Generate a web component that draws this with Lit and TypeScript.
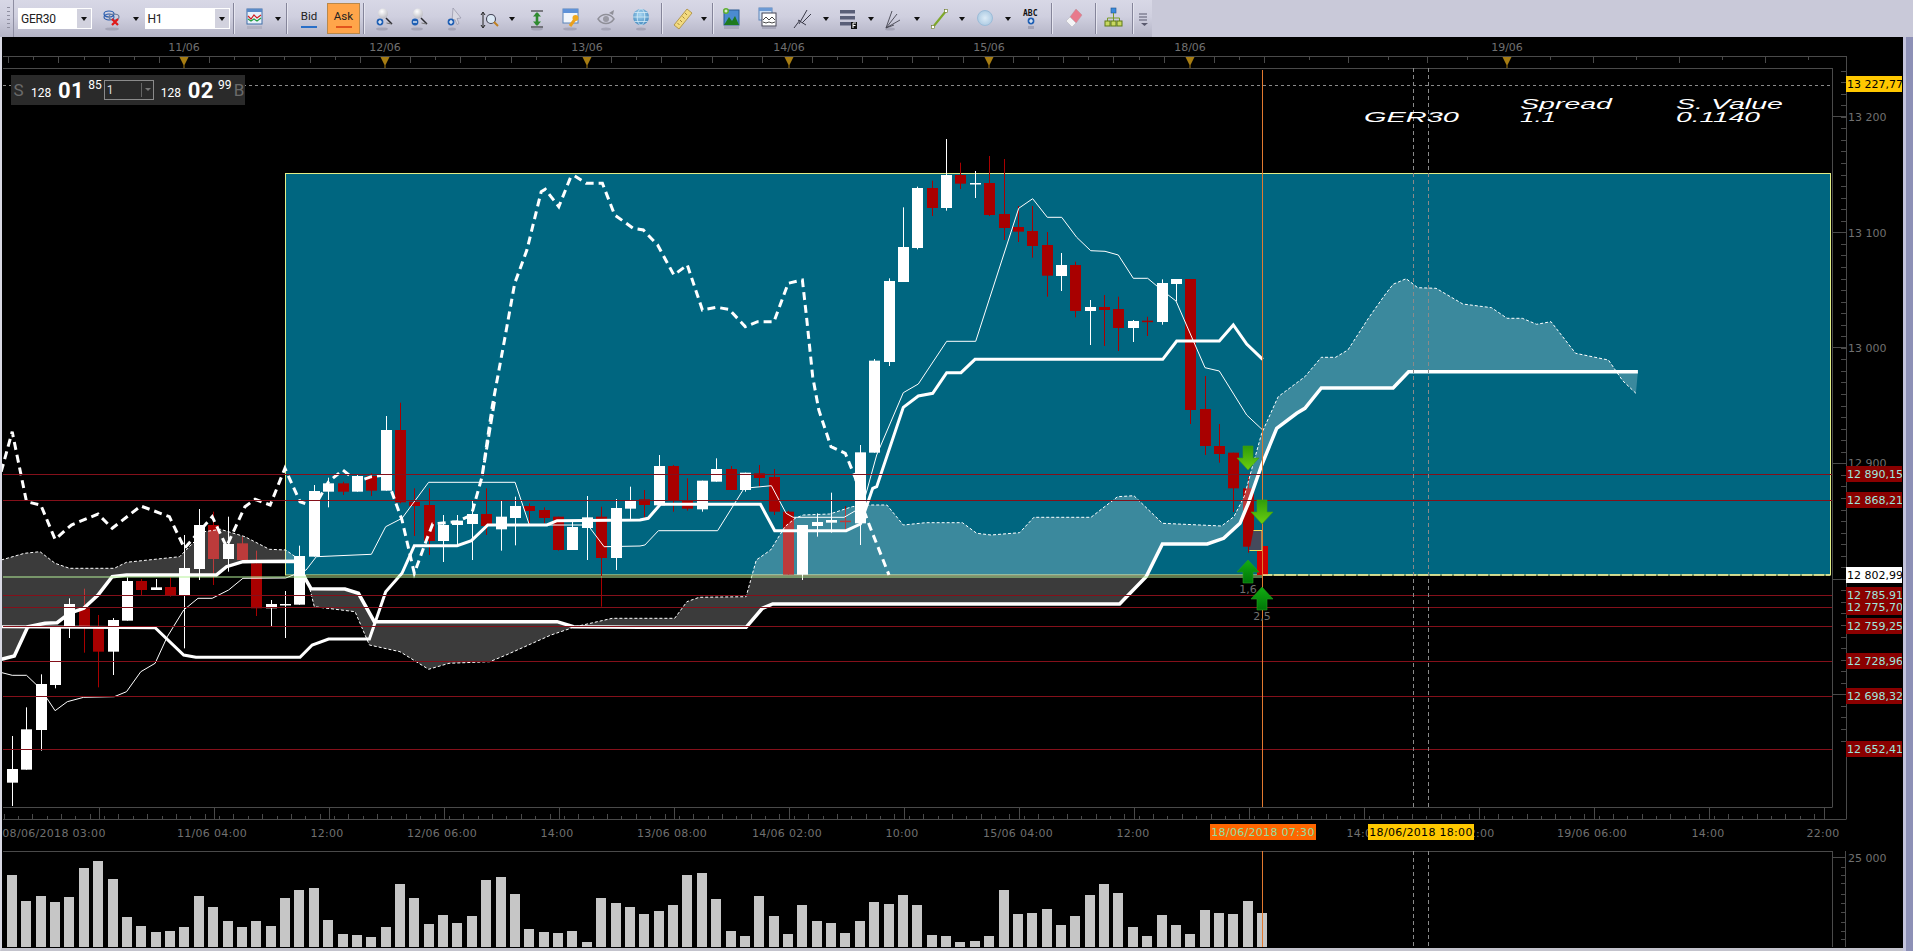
import { LitElement, html, css, svg } from 'lit';
import { customElement } from 'lit/decorators.js';

type Pt = [number, number];
type Candle = [0 | 1, number, number, number, number]; // 1 = red, wick top, body top, body bottom, wick bottom

const BAR_STEP = 14.37;
const barX = (k: number) => 12 + BAR_STEP * k;

// readings taken off three crops of the chart, each with its own origin and scale
const scaled = (x0: number, sx: number, y0: number, raw: number[]): Pt[] => {
  const out: Pt[] = [];
  for (let i = 0; i < raw.length; i += 2) out.push([x0 + raw[i] / sx, y0 + raw[i + 1] / 3]);
  return out;
};
const west = (raw: number[]) => scaled(0, 2.45, 400, raw);
const mid = (raw: number[]) => scaled(640, 2.45, 400, raw);
const top = (raw: number[]) => scaled(280, 2.45, 120, raw);
const peak = (raw: number[]) => scaled(860, 3, 120, raw);
const last = (raw: number[]) => scaled(1130, 3, 400, raw);
const east = (raw: number[]) => scaled(1270, 2.438, 40, raw);
const poly = (pts: Pt[]) => pts.map(p => `${p[0].toFixed(1)},${p[1].toFixed(1)}`).join(' ');

const candleRows = (y0: number, rows: Candle[]): Candle[] =>
  rows.map(r => [r[0], y0 + r[1] / 3, y0 + r[2] / 3, y0 + r[3] / 3, y0 + r[4] / 3]);

const CANDLES: Candle[] = [
  ...candleRows(400, [
    [0, 1008, 1107, 1148, 1218], [0, 922, 988, 1109, 1109], [0, 823, 852, 990, 1052], [0, 684, 684, 855, 865],
    [0, 595, 612, 678, 714], [1, 566, 625, 678, 758], [1, 645, 685, 755, 862], [0, 654, 660, 755, 825],
    [0, 532, 543, 662, 662], [1, 537, 543, 570, 587], [0, 537, 562, 570, 570], [1, 533, 561, 587, 590],
    [0, 405, 504, 585, 745], [0, 327, 375, 507, 540], [1, 335, 375, 477, 555], [0, 350, 432, 477, 515],
    [1, 410, 430, 480, 480], [1, 452, 490, 625, 648], [0, 600, 612, 625, 678], [0, 573, 612, 615, 714],
    [0, 437, 468, 614, 614], [0, 255, 273, 470, 470], [0, 233, 250, 275, 322], [1, 245, 250, 275, 285],
    [0, 225, 228, 275, 275], [1, 220, 228, 272, 288], [0, 48, 90, 272, 272], [1, 8, 90, 307, 310],
    [1, 265, 305, 318, 408], [1, 265, 315, 423, 465], [0, 345, 375, 423, 486], [0, 345, 362, 375, 432],
    [0, 300, 342, 372, 480], [1, 265, 342, 378, 405], [0, 303, 350, 388, 452], [0, 290, 318, 354, 436],
    [1, 310, 318, 333, 370], [1, 322, 330, 354, 370], [1, 350, 350, 450, 452], [0, 365, 381, 450, 450],
    [0, 288, 352, 384, 480], [1, 320, 350, 474, 620], [0, 297, 324, 474, 510], [0, 260, 300, 326, 360],
    [1, 270, 298, 315, 355], [0, 165, 198, 316, 316], [1, 195, 198, 302, 335], [1, 235, 300, 326, 332],
    [0, 242, 242, 328, 335], [0, 175, 207, 245, 245], [1, 198, 207, 270, 270], [0, 218, 218, 270, 275],
    [1, 195, 220, 234, 262], [1, 207, 231, 335, 345], [1, 332, 335, 524, 524], [0, 375, 375, 524, 540],
    [0, 340, 366, 378, 410], [0, 278, 360, 368, 398], [1, 318, 362, 366, 395], [0, 135, 157, 370, 435],
  ]),
  ...candleRows(120, [
    [0, 717, 722, 998, 998], [0, 475, 483, 726, 738], [0, 262, 381, 486, 486], [0, 200, 204, 384, 388],
    [1, 182, 204, 264, 288], [0, 57, 165, 264, 272], [1, 128, 165, 191, 207], [0, 153, 189, 191, 234],
    [1, 108, 189, 285, 288], [1, 117, 282, 324, 360], [1, 258, 321, 335, 366], [1, 258, 333, 378, 413],
    [1, 336, 375, 467, 530], [0, 399, 435, 468, 513], [1, 425, 435, 573, 592], [0, 540, 561, 573, 675],
    [1, 525, 561, 570, 678], [1, 530, 567, 624, 693], [0, 600, 603, 624, 666], [1, 590, 602, 604, 648],
    [0, 478, 489, 606, 614], [0, 477, 477, 492, 543], [1, 477, 477, 870, 912], [1, 768, 867, 978, 1005],
    [1, 912, 978, 1002, 1028],
  ]),
  ...candleRows(400, [
    [1, 158, 158, 265, 336], [1, 230, 265, 440, 458], [1, 438, 438, 525, 525],
  ]),
];

const LEADING_THICK: Pt[] = [
  ...west([3, 778, 35, 768, 68, 680, 110, 670, 140, 668, 170, 640, 205, 625, 240, 585, 275, 530, 310, 525, 530, 525,
    555, 500, 595, 485, 725, 484, 745, 530, 762, 566, 845, 567, 878, 580, 917, 665, 1365, 665, 1405, 680, 1568, 682]),
  ...mid([260, 682, 300, 625, 325, 612, 1175, 612, 1240, 530, 1280, 432, 1390, 432, 1430, 415, 1470, 370]),
  ...last([355, 310, 395, 195, 440, 85, 500, 40]),
  ...east([85, 1105, 125, 1044, 300, 1044, 338, 995, 897, 995]),
];

const BASE_LINE: Pt[] = [
  ...west([3, 680, 380, 683, 450, 765, 480, 772, 735, 772, 765, 735, 805, 717, 905, 717, 945, 575, 985, 520, 1015, 437,
    1120, 437, 1155, 422, 1195, 375, 1340, 375, 1365, 362, 1568, 360]),
  ...mid([20, 355, 50, 313, 295, 313, 330, 392, 505, 392, 540, 372, 570, 265]),
  ...peak([50, 1100, 130, 862, 175, 828, 218, 820, 260, 758, 303, 758, 345, 718, 908, 718, 950, 663, 1078, 663, 1120, 615, 1160, 672, 1208, 718]),
];

const THIN_LINE: Pt[] = [
  ...west([5, 818, 30, 826, 65, 826, 90, 855, 115, 895, 135, 932, 165, 905, 205, 892, 280, 890, 310, 875, 345, 815, 380, 790,
    410, 710, 450, 630, 485, 595, 520, 595, 560, 570, 595, 535, 700, 534, 750, 510, 775, 470, 910, 463, 945, 380, 985, 355,
    1050, 247, 1262, 247, 1297, 375, 1440, 375, 1480, 440, 1568, 438]),
  ...mid([12, 435, 45, 392, 190, 392, 255, 265, 322, 257, 358, 340, 375, 352, 500, 352, 545, 320, 580, 165]),
  ...peak([130, 818, 175, 792, 260, 664, 347, 664, 476, 265, 518, 236, 562, 292, 605, 292, 650, 352, 692, 392, 735, 394,
    775, 405, 820, 475, 863, 475, 905, 510, 948, 543, 1035, 743, 1078, 753, 1160, 885, 1208, 930]),
];

const LAG_LINE: Pt[] = [
  ...west([3, 215, 30, 95, 65, 305, 100, 315, 135, 418, 175, 375, 240, 342, 275, 385, 345, 318, 415, 350, 452, 445, 520, 350,
    555, 440, 600, 320, 625, 298, 662, 315, 698, 205, 735, 305, 770, 320, 805, 245, 840, 210, 875, 245, 910, 230, 945, 225,
    985, 360, 1015, 520, 1045, 420, 1060, 372, 1120, 365, 1155, 345, 1180, 235, 1212, 0]),
  ...top([495, 1070, 520, 860, 550, 660, 575, 490, 605, 390, 640, 215, 650, 208, 683, 260, 712, 172, 722, 168, 750, 190, 790, 190,
    820, 285, 865, 325, 890, 330, 925, 375, 965, 465, 998, 435, 1035, 570, 1070, 562, 1100, 568, 1140, 620, 1170, 605, 1210, 605,
    1245, 490, 1280, 480, 1290, 590, 1305, 770, 1320, 870, 1350, 980, 1385, 1000, 1410, 1075]),
  ...mid([545, 320, 560, 370, 610, 525]),
];

const CLOUD_EDGE: Pt[] = [
  ...west([3, 480, 60, 460, 98, 455, 135, 490, 170, 505, 280, 505, 310, 487, 440, 470, 500, 395, 540, 388, 600, 410, 660, 448,
    700, 450, 735, 480, 760, 570, 770, 620, 870, 635, 905, 735, 980, 755, 1050, 808, 1100, 790, 1200, 785, 1240, 765, 1350, 705,
    1410, 680, 1500, 655, 1568, 655]),
  ...mid([85, 655, 115, 605, 145, 592, 260, 590, 285, 480, 320, 450, 355, 380, 380, 355, 400, 345, 465, 342, 520, 320, 560, 315,
    605, 315, 645, 375, 700, 368, 790, 368, 825, 400, 860, 405, 930, 398, 965, 352, 1105, 352, 1170, 290, 1210, 287, 1280, 370,
    1425, 378, 1455, 350, 1480, 290]),
  ...last([395, 100, 440, 0]),
  ...east([20, 1070, 85, 1010, 125, 952, 160, 952, 190, 930, 240, 835, 280, 765, 300, 733, 332, 716, 360, 743, 405, 745, 470, 792,
    540, 803, 578, 835, 615, 835, 650, 853, 685, 845, 745, 940, 825, 960, 860, 1022, 892, 1060]),
];

const VOLUMES = [225, 303, 288, 306, 291, 204, 183, 237, 351, 378, 396, 393, 381, 288, 321, 363, 381, 363, 378, 294, 270, 264,
  360, 402, 405, 411, 381, 252, 294, 372, 345, 369, 348, 240, 231, 282, 387, 396, 399, 393, 426, 294, 309, 321, 342, 333, 315,
  225, 219, 297, 393, 408, 288, 348, 402, 315, 363, 369, 399, 363, 306, 312, 285, 315, 405, 408, 426, 423, 408, 270, 342, 339,
  327, 375, 348, 285, 252, 279, 381, 408, 345, 375, 402, 330, 339, 342, 303, 339];

const LEVELS: [number, string][] = [
  [474, '12 890,15'], [500, '12 868,21'], [595, '12 785,91'], [607, '12 775,70'],
  [626, '12 759,25'], [661, '12 728,96'], [696, '12 698,32'], [749, '12 652,41'],
];
const PRICE_TICKS: [number, string][] = [[117, '13 200'], [233, '13 100'], [348, '13 000'], [463, '12 900'], [579, '12 800']];
const DATE_MARKS: [number, string][] = [[184, '11/06'], [385, '12/06'], [587, '13/06'], [789, '14/06'], [989, '15/06'], [1190, '18/06'], [1507, '19/06']];
const TIME_LABELS: [number, string][] = [[54, '08/06/2018 03:00'], [212, '11/06 04:00'], [327, '12:00'], [442, '12/06 06:00'], [557, '14:00'],
  [672, '13/06 08:00'], [787, '14/06 02:00'], [902, '10:00'], [1018, '15/06 04:00'], [1133, '12:00'], [1363, '14:00'], [1478, '22:00'],
  [1592, '19/06 06:00'], [1708, '14:00'], [1823, '22:00']];

const topTicks: number[] = [];
for (let x = 184 - 25.12 * 7; x < 1275; x += 25.12) topTicks.push(x);
topTicks.push(1309, 1348, 1388, 1427, 1467, 1507, 1550, 1593, 1636, 1679, 1722, 1765, 1808);

const arrowDown = (x: number, y: number) => svg`
  <path d="M${x - 5} ${y} h10 v12 h6 l-11 12 l-11 -12 h6 z" fill="url(#downFill)" stroke="#3f9d10" stroke-width=".6"/>`;
const arrowUp = (x: number, y: number) => svg`
  <path d="M${x} ${y} l11 12 h-6 v11 h-10 v-11 h-6 z" fill="url(#upFill)" stroke="#26a01f" stroke-width=".6"/>`;

const drawChart = () => svg`
  <defs>
    <linearGradient id="downFill" x1="0" y1="0" x2="0" y2="1"><stop offset="0" stop-color="#2f9c0a"/><stop offset="1" stop-color="#6ccf10"/></linearGradient>
    <linearGradient id="upFill" x1="0" y1="0" x2="0" y2="1"><stop offset="0" stop-color="#12ad12"/><stop offset="1" stop-color="#007508"/></linearGradient>
    <clipPath id="priceClip"><rect x="1846" y="37" width="56" height="800"/></clipPath>
  </defs>

  <!-- top date axis -->
  <g stroke="#4a4a4a" fill="none">
    <path d="M3 56.5H1846.5M3 68.5H1832.5M1832.5 68V807.5M1846.5 56V819.5M3 807.5H1832M3 819.5H1846M3 851.5H1832.5M1832.5 851V947M1845.5 851V947"/>
    ${topTicks.map((x, i) => svg`<path d="M${Math.round(x) + .5} 56V${i % 2 ? 60 : 63}"/>`)}
    ${Array.from({ length: 127 }, (_, i) => 3.5 + i * 14.37).map((x, i) => svg`<path d="M${Math.round(x) + .5} ${i % 2 ? 816 : 814}V819"/>`)}
    ${Array.from({ length: 16 }, (_, k) => 99 + 115 * k).map(x => svg`<path d="M${x + .5} 807V819"/>`)}
    ${Array.from({ length: 61 }, (_, i) => 47.5 + i * 11.55).filter(y => y > 70 && y < 790).map(y => svg`<path d="M1841 ${Math.round(y) + .5}H1846"/>`)}
    ${[116, 232, 347, 463, 579, 694].map(y => svg`<path d="M1832 ${y + .5}H1846"/>`)}
    <path d="M1832 857.5H1845"/>
    ${[867, 875, 883, 894, 903, 912, 922, 931, 939].map(y => svg`<path d="M1841 ${y + .5}H1845"/>`)}
  </g>
  ${DATE_MARKS.map(([x, t]) => svg`
    <text class="axis" x=${x} y="51" text-anchor="middle">${t}</text>
    <path d="M${x - 4.5} 57h9l-4 8v3h-1v-3z" fill="#a67c12"/>`)}
  ${TIME_LABELS.map(([x, t]) => svg`<text class="axis time" x=${x} y="837" text-anchor="middle">${t}</text>`)}

  <!-- dashed cursor guides -->
  <path d="M3 85.5H1831" stroke="#8a8a8a" stroke-dasharray="3 3"/>

  <!-- teal box -->
  <rect x="285.5" y="173.5" width="1545" height="401.5" fill="#006680" stroke="#e2ee88" stroke-width="1"/>

  <!-- candles -->
  ${CANDLES.map((c, k) => {
    const x = Math.round(barX(k));
    const col = k === 87 ? '#d00000' : c[0] ? '#a80000' : '#ffffff';
    return svg`
      <rect x=${x} y=${c[1]} width="1" height=${c[4] - c[1]} fill=${col}/>
      <rect x=${x - 5} y=${c[2]} width="11" height=${Math.max(c[3] - c[2], 1.5)} fill=${col}/>`;
  })}

  <!-- cloud, drawn over the candles -->
  <polygon points=${poly([...CLOUD_EDGE, ...[...LEADING_THICK].reverse()])} fill="#ffffff" fill-opacity=".23"/>
  <polyline points=${poly(CLOUD_EDGE)} fill="none" stroke="#ffffff" stroke-width="1" stroke-dasharray="3 2"/>

  <polyline points=${poly(THIN_LINE)} fill="none" stroke="#ffffff" stroke-width="1"/>
  <polyline points=${poly(LAG_LINE)} fill="none" stroke="#ffffff" stroke-width="3" stroke-dasharray="8 5"/>
  <polyline points=${poly(BASE_LINE)} fill="none" stroke="#ffffff" stroke-width="3"/>
  <polyline points=${poly(LEADING_THICK)} fill="none" stroke="#ffffff" stroke-width="3.5"/>

  <path d="M1253.5 530.5h8.5v20h-12.5" fill="#444a5c" stroke="#e8e060" stroke-width="1"/>

  <!-- box bottom and horizontal levels -->
  <path d="M3 577H1262" stroke="#b6f29a" stroke-width="1.2"/>
  <path d="M1262 575H1830" stroke="#eef09a" stroke-width="1.5" stroke-dasharray="10 2"/>
  ${LEVELS.map(([y]) => svg`<path d="M3 ${y + .5}H1832" stroke="#84101a"/>`)}

  <path d="M1413.5 68V807M1428.5 68V807M1413.5 851V947M1428.5 851V947" stroke="#8a8a8a" stroke-dasharray="4 3"/>

  <!-- volumes -->
  ${VOLUMES.map((v, k) => svg`<rect x=${Math.round(barX(k)) - 5} y=${800 + v / 3} width="10" height=${147 - v / 3} fill="#c6c6c6"/>`)}

  <path d="M1262.5 70V807M1262.5 851V947" stroke="#e2792f"/>

  ${arrowDown(1248, 446)} ${arrowDown(1262, 500)} ${arrowUp(1248, 560)} ${arrowUp(1262, 587)}
  <text class="axis" x="1248" y="593" text-anchor="middle">1,6</text>
  <text class="axis" x="1262" y="620" text-anchor="middle">2,5</text>

  <!-- price labels -->
  ${PRICE_TICKS.map(([y, t]) => svg`<text class="axis" x="1848" y=${y + 4}>${t}</text>`)}
  <text class="axis" x="1848" y="862">25 000</text>
  <g clip-path="url(#priceClip)">
    <rect x="1846" y="76" width="56" height="16" fill="#ffc800"/>
    <text class="price" x="1847" y="88" fill="#000">13 227,77</text>
    ${LEVELS.map(([y, t]) => svg`
      <rect x="1846" y=${y - 8} width="56" height="16" fill="#8a0000"/>
      <text class="price" x="1847" y=${y + 4} fill="#9fe6df">${t}</text>`)}
    <rect x="1846" y="567" width="56" height="16" fill="#ffffff"/>
    <text class="price" x="1847" y="579" fill="#000">12 802,99</text>
  </g>

  <rect x="1210" y="824" width="106" height="16" fill="#ff6600"/>
  <text class="axis time" x="1263" y="836" text-anchor="middle" style="fill:#8fe0a0">18/06/2018 07:30</text>
  <rect x="1368" y="824" width="106" height="16" fill="#ffc800"/>
  <text class="axis time" x="1421" y="836" text-anchor="middle" style="fill:#000">18/06/2018 18:00</text>

  <g class="wide">
    <text x="1364" y="122" textLength="95" lengthAdjust="spacingAndGlyphs">GER30</text>
    <text x="1520" y="109" textLength="92" lengthAdjust="spacingAndGlyphs">Spread</text>
    <text x="1520" y="122" textLength="36" lengthAdjust="spacingAndGlyphs">1.1</text>
    <text x="1676" y="109" textLength="107" lengthAdjust="spacingAndGlyphs">S. Value</text>
    <text x="1676" y="122" textLength="84" lengthAdjust="spacingAndGlyphs">0.1140</text>
  </g>
`;

const dropArrow = html`<span class="drop"></span>`;

const icon = (body: unknown, w = 20, h = 24) => html`<svg width=${w} height=${h} viewBox="0 0 ${w} ${h}">${body}</svg>`;

const reflection = (cx: number, rx: number) => svg`<ellipse cx=${cx} cy="22" rx=${rx} ry="1.6" fill="#8f8fa3" opacity=".55"/>`;
const badge = (cx: number, cy: number, minus = false) => svg`
  <circle cx=${cx} cy=${cy} r="3.4" fill="#1f5fb4"/>
  <path d="M${cx - 2} ${cy}h4${minus ? '' : `M${cx} ${cy - 2}v4`}" stroke="#fff" stroke-width="1.2"/>`;

const magnify = (minus: boolean) => icon(svg`
  <defs><radialGradient id="ball" cx=".4" cy=".3" r=".8"><stop offset="0" stop-color="#fff"/><stop offset="1" stop-color="#b4b4bc"/></radialGradient></defs>
  <circle cx="8" cy="6.5" r="5" fill="url(#ball)"/>
  <path d="M11 11l6 6" stroke="#2a2a30" stroke-width="1.5"/>
  <path d="M11.5 16l5 1" stroke="#777" stroke-width="1"/>
  ${badge(5, 15, minus)}
  ${reflection(7, 6)}`);

const ICONS = {
  link: icon(svg`
    <ellipse cx="6" cy="7" rx="5" ry="3" fill="none" stroke="#2a5fb0" stroke-width="1.2"/>
    <ellipse cx="6" cy="10" rx="5" ry="3" fill="none" stroke="#2456a8" stroke-width="1.1"/>
    <ellipse cx="11" cy="10" rx="5" ry="3" fill="none" stroke="#6a7a98" stroke-width="1.2"/>
    <path d="M9 12l6 6M15 12l-6 6" stroke="#e01818" stroke-width="2.2"/>
    ${reflection(9, 7)}`),
  series: icon(svg`
    <rect x="2" y="2" width="15" height="15" fill="#e8f0fa" stroke="#3f6fa8"/>
    <rect x="2" y="2" width="15" height="3" fill="#5a8ac8"/>
    <path d="M3 9l3 3 3-4 3 3 4-3" fill="none" stroke="#d02020" stroke-width="1.2"/>
    <path d="M3 12l3 2 3-2 3 2 4-3" fill="none" stroke="#20a040" stroke-width="1.2"/>
    <rect x="2" y="19" width="15" height="3" fill="#a6a6b8" opacity=".6"/>`),
  cursorPlus: icon(svg`
    <path d="M8 1l8 10-4 .5 2 5-2 1-2-5-3 2z" fill="#d8d8e2" stroke="#8a8a9c" stroke-width=".6"/>
    ${badge(6, 15)}
    ${reflection(7, 4)}`),
  rangeZoom: icon(svg`
    <path d="M3 6v14M1 8l2-3 2 3M1 18l2 3 2-3" fill="none" stroke="#222" stroke-width="1"/>
    <circle cx="11" cy="12" r="4.5" fill="#dbe8f4" stroke="#445" stroke-width="1.1"/>
    <path d="M14 15l4 4" stroke="#c08020" stroke-width="2"/>`),
  fit: icon(svg`
    <path d="M4 4h12M4 20h12" stroke="#222" stroke-width="1.2"/>
    <path d="M10 6v12" stroke="#2f8a2f" stroke-width="2.6"/>
    <path d="M6 9.5L10 5l4 4.5zM6 14.5L10 19l4-4.5z" fill="#2f8a2f"/>
    ${reflection(10, 6)}`),
  winKey: icon(svg`
    <rect x="2" y="2" width="15" height="14" fill="#f2f6fb" stroke="#5a84b8"/>
    <rect x="2" y="2" width="15" height="4" fill="#5f92d8"/>
    <path d="M15 11l-6 8" stroke="#eaa01c" stroke-width="3"/>
    <circle cx="14.5" cy="11" r="3" fill="#f0a81e"/>
    ${reflection(9, 7)}`),
  eye: icon(svg`
    <path d="M2 12c4-6 12-6 16 0c-4 6-12 6-16 0z" fill="none" stroke="#8f8f98" stroke-width="1.4"/>
    <circle cx="10" cy="12" r="3" fill="#9a9aa4"/>
    <path d="M13 6l5-3-1 5z" fill="#8f8f98"/>
    ${reflection(10, 5)}`),
  globe: icon(svg`
    <defs><radialGradient id="orb" cx=".45" cy=".35" r=".7"><stop offset="0" stop-color="#a8d6f2"/><stop offset="1" stop-color="#3f86bc"/></radialGradient></defs>
    <circle cx="10" cy="10" r="8" fill="url(#orb)"/>
    <ellipse cx="10" cy="10" rx="3.8" ry="8" fill="none" stroke="#d6ecf8" stroke-width=".8"/>
    <path d="M2 10h16M3.5 5.5h13M3.5 14.5h13" stroke="#d6ecf8" stroke-width=".8"/>
    ${reflection(10, 5)}`),
  ruler: icon(svg`
    <path d="M14 2l5 4L6 22l-5-4z" fill="#f2da80" stroke="#a88a38" stroke-width=".8"/>
    <path d="M12 6l2 2M9.5 9.5l2 2M7 13l2 2M4.5 16l2 2" stroke="#a88a38"/>`),
  picture: icon(svg`
    <rect x="2" y="3" width="15" height="15" fill="#4b8bd0" stroke="#2a5a90"/>
    <path d="M2 18l5-8 3 4 3-5 4 9z" fill="#1e7a1e"/>
    <circle cx="4" cy="4" r="3" fill="#60b030"/>
    <path d="M2.5 4h3M4 2.5v3" stroke="#fff"/>
    <rect x="2" y="19" width="15" height="3" fill="#8f8fa3" opacity=".5"/>`),
  windowChart: icon(svg`
    <rect x="1" y="1" width="13" height="12" fill="#cfe0f4" stroke="#5a84b8"/>
    <rect x="1" y="1" width="13" height="3" fill="#6c9ad4"/>
    <rect x="4" y="6" width="14" height="13" fill="#fff" stroke="#445"/>
    <path d="M5 13l3-3 3 3 3-3 3 3M5 15l3 1 3-1 3 1 3-1" fill="none" stroke="#333" stroke-width=".9"/>
    <rect x="4" y="20" width="14" height="2" fill="#8f8fa3" opacity=".5"/>`),
  fork: icon(svg`
    <path d="M1 21l6-8M6 17L14 3M9 16l9-9M5 13l8 5" fill="none" stroke="#3a3a48" stroke-width="1"/>`),
  list: icon(svg`
    <rect x="1" y="3" width="15" height="3.5" fill="#5a5f78"/>
    <rect x="1" y="9" width="15" height="3.5" fill="#5a5f78"/>
    <rect x="1" y="15" width="11" height="3.5" fill="#5a5f78"/>
    <rect x="12" y="15" width="6" height="7" fill="#111"/>
    <path d="M14 21v-5h3M14 18.5h2.5" stroke="#fff" fill="none"/>`),
  fan: icon(svg`
    <path d="M2 21L8 4M2 21L13 7M2 21L16 13M2 21L10 18" fill="none" stroke="#44444f" stroke-width=".9"/>
    ${reflection(6, 5)}`),
  line: icon(svg`
    <path d="M3 20L16 4" stroke="#7ea82a" stroke-width="2.2"/>
    <rect x="1.5" y="18.5" width="3" height="3" fill="#fff" stroke="#68781f" stroke-width=".6"/>
    <rect x="14.5" y="2.5" width="3" height="3" fill="#fff" stroke="#68781f" stroke-width=".6"/>`),
  ellipse: icon(svg`
    <defs><radialGradient id="disc" cx=".5" cy=".5" r=".6"><stop offset="0" stop-color="#dcebf6"/><stop offset="1" stop-color="#a6c6e0"/></radialGradient></defs>
    <circle cx="10" cy="11" r="7.5" fill="url(#disc)" stroke="#9cbcd8"/>`),
  abc: icon(svg`
    <text class="abc" x="2" y="9">ABC</text>
    ${badge(10, 14)}
    <rect x="7" y="19" width="6" height="3" fill="#8f8fa3" opacity=".6"/>`),
  eraser: icon(svg`
    <path d="M12 2l6 6-6 8-6-6z" fill="#e87a8c" stroke="#b89098" stroke-width=".5"/>
    <path d="M6 10l6 6-4 4-6-6z" fill="#f4f4f6" stroke="#b0b0b8" stroke-width=".5"/>`),
  tree: icon(svg`
    <rect x="7" y="1" width="5" height="5" fill="#3a8adc" stroke="#20558c" stroke-width=".6"/>
    <path d="M9.5 6v5M3.5 14v-3h12v3M9.5 11v3" fill="none" stroke="#7a9a28"/>
    <rect x="1" y="14" width="5" height="5" fill="#c8d860" stroke="#5f7a18"/>
    <rect x="7" y="14" width="5" height="5" fill="#c8d860" stroke="#5f7a18"/>
    <rect x="13" y="14" width="5" height="5" fill="#c8d860" stroke="#5f7a18"/>`),
  more: icon(svg`
    <path d="M1 3h8M1 6h8M1 9h8" stroke="#5a5a6e" stroke-width="1.2"/>
    <path d="M3 12h7l-3.5 3z" fill="#5a5a6e"/>`, 11, 16),
};

@customElement('app-root')
export class AppRoot extends LitElement {
  static styles = css`
    :host {
      display: flex;
      flex-direction: column;
      height: 951px;
      background: #c9c9d9;
      font-family: 'DejaVu Sans', sans-serif;
      overflow: hidden;
    }

    .toolbar {
      display: flex;
      align-items: center;
      flex: 0 0 37px;
      background: #c9c9d9;
    }
    .band {
      display: flex;
      align-items: center;
      height: 37px;
      width: 1152px;
      background: linear-gradient(#d8d8e6 0, #cfcfdf 45%, #b4b4c6 100%);
    }
    .grip {
      width: 3px;
      height: 24px;
      margin: 0 3px 0 7px;
      background: repeating-linear-gradient(#8f8fa0 0 1px, transparent 1px 4px);
    }
    .edge {
      width: 1px;
      height: 37px;
      background: #8e8ea2;
      margin-right: 4px;
    }
    .combo {
      display: flex;
      align-items: center;
      height: 21px;
      background: #fff;
      font: 12px Roboto, sans-serif;
      letter-spacing: -.2px;
      color: #222;
      padding-left: 3px;
      box-sizing: border-box;
    }
    .combo span {
      flex: 1;
    }
    .combo i {
      align-self: stretch;
      width: 14px;
      display: flex;
      align-items: center;
      justify-content: center;
      background: #d2d2de;
      border: 1px solid #fff;
    }
    .combo i::after, .drop::after {
      content: '';
      border-left: 3.5px solid transparent;
      border-right: 3.5px solid transparent;
      border-top: 4px solid #111;
    }
    .ger { width: 74px; }
    .tf { width: 85px; margin-left: 4px; }
    .slot {
      display: flex;
      align-items: center;
      justify-content: center;
      flex: none;
      width: 35.5px;
      height: 37px;
    }
    .narrow { margin-left: 3px; }
    .compact { width: 34.8px; }
    .short { width: 33px; }
    .tree { width: 29px; }
    .drop {
      display: flex;
      align-items: center;
      justify-content: center;
      flex: none;
      width: 10px;
      height: 37px;
    }
    .drop.pad { margin-right: 2px; }
    .sep {
      flex: none;
      width: 1px;
      height: 31px;
      background: #85859a;
      border-right: 1px solid #e6e6f0;
      margin: 0 3px;
    }
    .sep.tight { margin-right: 0; }
    .price-side {
      display: flex;
      flex-direction: column;
      align-items: center;
      flex: none;
      font: 11.5px Roboto, sans-serif;
      color: #222;
    }
    .price-side b {
      display: block;
      font-weight: 400;
      line-height: 13px;
    }
    .price-side u {
      display: block;
      width: 16px;
      height: 2px;
      background: #2a6fc8;
      margin-top: 3px;
    }
    .bid { width: 34px; margin-left: 1px; }
    .ask {
      width: 33px;
      height: 31px;
      margin-left: 1px;
      justify-content: center;
      background: #ffa54a;
      border: 1px solid #b9884a;
      box-sizing: border-box;
    }
    .ask u { background: #e2541c; }
    .chevron { margin-left: 1px; display: flex; }
    .abc {
      font: 700 8px 'DejaVu Sans Mono', monospace;
      fill: #111;
    }

    .workspace {
      flex: 1;
      display: flex;
      min-height: 0;
    }
    .chart {
      position: relative;
      flex: 1;
      background: #000;
      border-left: 2px solid #d9d9e3;
      border-bottom: 3px solid #c3c3cc;
    }
    .chart svg.plot {
      display: block;
    }
    .side {
      width: 10px;
      background: #8d90b6;
      border-left: 3px solid #c3c3dc;
      box-sizing: border-box;
    }
    .plot text {
      font-family: 'DejaVu Sans', sans-serif;
      font-size: 11px;
    }
    .plot .axis { fill: #707070; }
    .plot .time { letter-spacing: .3px; }
    .plot .wide text {
      font-family: 'Liberation Sans', sans-serif;
      font-style: italic;
      font-size: 15px;
      fill: #fff;
    }

    .quote {
      position: absolute;
      left: 9px;
      top: 38px;
      width: 234px;
      height: 30px;
      display: flex;
      align-items: center;
      background: #2a2a2a;
      color: #fff;
      font-family: Roboto, sans-serif;
    }
    .quote .side-mark { font-size: 17px; color: #6a6a6a; margin: 0 7px 0 2px; width: 11px; text-align: center; }
    .quote .side-mark.end { margin: 0 0 0 2px; }
    .quote .lots { font-size: 12px; width: 20px; margin-top: 5px; }
    .quote .big { font-size: 22px; font-weight: 700; margin-left: 7px; letter-spacing: .5px; }
    .quote .sup { font-size: 12px; align-self: flex-start; margin: 3px 0 0 4px; }
    .quote .qty {
      width: 50px;
      height: 20px;
      box-sizing: border-box;
      border: 1px solid #8a8a8a;
      margin: 0 7px 0 2px;
      font-size: 12px;
      line-height: 18px;
      padding-left: 2px;
      position: relative;
      color: #ddd;
    }
    .quote .qty::after {
      content: '';
      position: absolute;
      right: 2px;
      top: 7px;
      border-left: 3px solid transparent;
      border-right: 3px solid transparent;
      border-top: 3px solid #777;
    }
    .quote .qty::before {
      content: '';
      position: absolute;
      right: 11px;
      top: 2px;
      bottom: 2px;
      width: 1px;
      background: #666;
    }
  `;

  render() {
    const s = (ic: unknown) => html`<div class="slot">${ic}</div>`;
    const c = (ic: unknown) => html`<div class="slot compact">${ic}</div>`;
    return html`
      <div class="toolbar">
        <div class="band">
          <div class="grip"></div>
          <div class="edge"></div>
          <div class="combo ger"><span>GER30</span><i></i></div>
          <div class="slot narrow">${ICONS.link}</div>${dropArrow}
          <div class="combo tf"><span>H1</span><i></i></div>
          <div class="sep"></div>
          ${s(ICONS.series)}${dropArrow}
          <div class="sep"></div>
          <div class="price-side bid"><b>Bid</b><u></u></div>
          <div class="price-side ask"><b>Ask</b><u></u></div>
          <div class="sep"></div>
          ${c(magnify(false))}${c(magnify(true))}${c(ICONS.cursorPlus)}${c(ICONS.rangeZoom)}<span class="drop pad"></span>
          ${c(ICONS.fit)}${c(ICONS.winKey)}${c(ICONS.eye)}${c(ICONS.globe)}
          <div class="sep"></div>
          <div class="slot short">${ICONS.ruler}</div>${dropArrow}
          <div class="sep tight"></div>
          ${s(ICONS.picture)}${s(ICONS.windowChart)}${s(ICONS.fork)}${dropArrow}
          ${s(ICONS.list)}${dropArrow}${s(ICONS.fan)}${dropArrow}${s(ICONS.line)}${dropArrow}
          ${s(ICONS.ellipse)}${dropArrow}${s(ICONS.abc)}
          <div class="sep"></div>
          ${s(ICONS.eraser)}
          <div class="sep"></div>
          <div class="slot tree">${ICONS.tree}</div>
          <div class="sep"></div>
          <div class="chevron">${ICONS.more}</div>
        </div>
      </div>
      <div class="workspace">
        <div class="chart">
          <svg class="plot" width="1901" height="911" viewBox="2 37 1901 911">${drawChart()}</svg>
          <div class="quote">
            <span class="side-mark">S</span><span class="lots">128</span><span class="big">01</span><span class="sup">85</span>
            <span class="qty">1</span>
            <span class="lots">128</span><span class="big">02</span><span class="sup">99</span><span class="side-mark end">B</span>
          </div>
        </div>
        <div class="side"></div>
      </div>
    `;
  }
}
